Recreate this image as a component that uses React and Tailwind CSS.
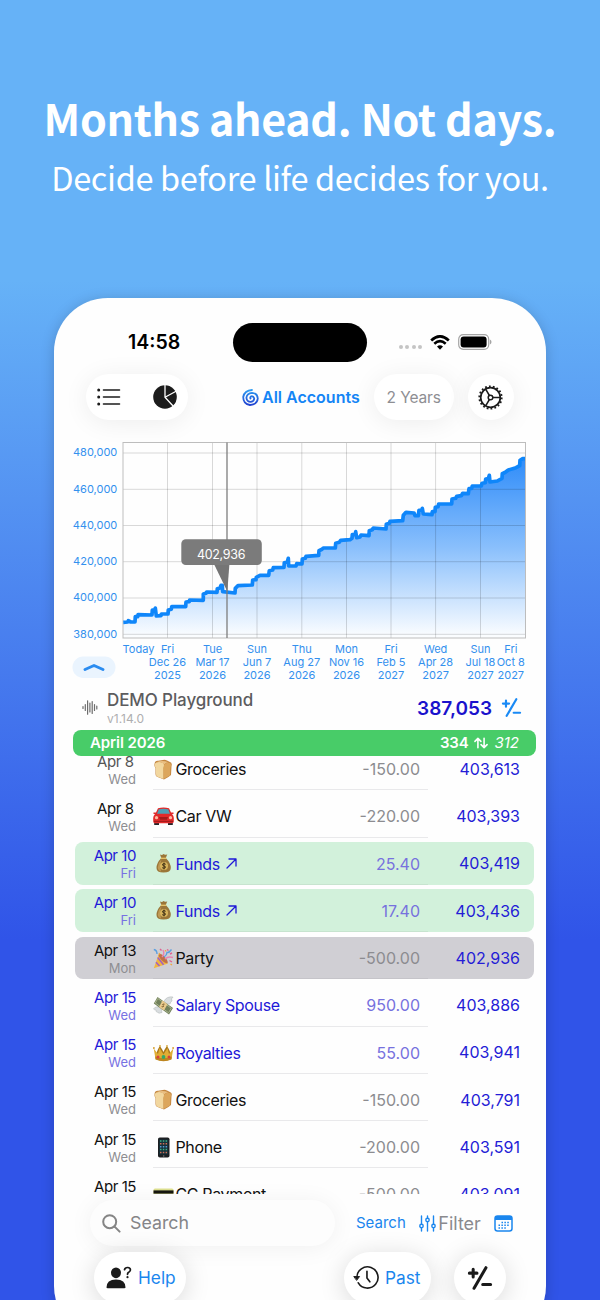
import React from 'react';

const TRANSACTIONS = [
    { date: 'Apr 8', day: 'Wed', icon: 'bread', name: 'Groceries', amount: '-150.00', balance: '403,613', faded: true },
    { date: 'Apr 8', day: 'Wed', icon: 'car', name: 'Car VW', amount: '-220.00', balance: '403,393' },
    { date: 'Apr 10', day: 'Fri', icon: 'bag', name: 'Funds', amount: '25.40', balance: '403,419', income: true, link: true, highlight: 'green' },
    { date: 'Apr 10', day: 'Fri', icon: 'bag', name: 'Funds', amount: '17.40', balance: '403,436', income: true, link: true, highlight: 'green' },
    { date: 'Apr 13', day: 'Mon', icon: 'party', name: 'Party', amount: '-500.00', balance: '402,936', highlight: 'gray' },
    { date: 'Apr 15', day: 'Wed', icon: 'money', name: 'Salary Spouse', amount: '950.00', balance: '403,886', income: true },
    { date: 'Apr 15', day: 'Wed', icon: 'crown', name: 'Royalties', amount: '55.00', balance: '403,941', income: true },
    { date: 'Apr 15', day: 'Wed', icon: 'bread', name: 'Groceries', amount: '-150.00', balance: '403,791' },
    { date: 'Apr 15', day: 'Wed', icon: 'phone', name: 'Phone', amount: '-200.00', balance: '403,591' },
    { date: 'Apr 15', day: 'Wed', icon: 'card', name: 'CC Payment', amount: '-500.00', balance: '403,091' },
];

const Y_TICKS = [
    ['480,000', 23], ['460,000', 59.3], ['440,000', 95.5], ['420,000', 131.7], ['400,000', 168], ['380,000', 204.3],
];

const X_TICKS = [
    [107.5, 'Fri', 'Dec 26', '2025'],
    [152.5, 'Tue', 'Mar 17', '2026'],
    [197, 'Sun', 'Jun 7', '2026'],
    [241.8, 'Thu', 'Aug 27', '2026'],
    [286.5, 'Mon', 'Nov 16', '2026'],
    [331, 'Fri', 'Feb 5', '2027'],
    [375.6, 'Wed', 'Apr 28', '2027'],
    [420.5, 'Sun', 'Jul 18', '2027'],
];

// balance curve, three units per pixel
const CURVE = [
    [190, 577], [203, 576], [205, 572], [212, 576], [225, 576], [226, 560], [233, 560], [234, 554], [276, 555], [277, 540], [285, 540], [286, 534],
    [289, 558], [303, 557], [304, 552], [324, 552], [325, 540], [334, 538], [335, 530], [377, 530], [378, 516], [388, 515], [389, 510], [430, 511], [430, 492],
    [438, 490], [440, 486], [471, 487], [472, 476], [480, 474], [483, 466], [487, 466], [488, 485], [525, 489], [526, 475], [534, 467], [577, 465], [578, 450],
    [588, 449], [589, 442], [600, 436], [626, 436], [628, 422], [638, 420], [640, 413], [672, 412], [673, 398], [682, 396], [685, 385], [686, 408], [708, 408],
    [710, 401], [726, 402], [727, 387], [736, 385], [738, 379], [776, 376], [777, 362], [786, 358], [790, 354], [826, 354], [827, 340], [838, 337], [842, 331],
    [870, 329], [876, 325], [877, 314], [886, 313], [887, 305], [890, 323], [900, 321], [903, 315], [927, 317], [928, 302], [937, 299], [940, 294], [978, 297],
    [979, 283], [988, 280], [990, 274], [1028, 272], [1030, 256], [1038, 247], [1062, 249], [1065, 257], [1075, 257], [1077, 241], [1086, 240], [1087, 235],
    [1090, 252], [1116, 254], [1117, 245], [1125, 245], [1126, 232], [1134, 230], [1136, 222], [1175, 222], [1176, 207], [1187, 205], [1190, 199], [1204, 197],
    [1208, 190], [1225, 191], [1227, 176], [1235, 175], [1237, 168], [1264, 168], [1266, 160], [1276, 158], [1277, 147], [1285, 146], [1288, 136], [1290, 156],
    [1312, 153], [1326, 145], [1327, 131], [1336, 127], [1345, 120], [1368, 113], [1379, 107], [1380, 91], [1388, 86], [1395, 86],
].map(([x, y]) => `${(x / 3).toFixed(1)},${(y / 3).toFixed(1)}`).join(' ');

const EmojiIcon = ({ name }) => {
    switch (name) {
        case 'bread':
            return (
                <svg className="size-[21px]" viewBox="0 0 21 21">
                    <path d="M1.500 5Q2 1.500 5 1.800L10 1Q12 0.500 14 1.500L17 3Q19.500 4 18.500 7L18 16Q16 18 11 20.500L4 17.800Q2.500 17 2.500 15L2.500 9Q1 7 1.500 5Z" fill="#c4863f" />
                    <path d="M1.800 5Q3 2.500 7 3Q11 3.500 11 6Q11 8 10.500 9L10.500 20L4 17.500Q3 17 3 15L2.800 9Q1.500 7 1.800 5Z" fill="#f2d79f" />
                    <path d="M11 6Q13 3 16.500 3.800Q19 5 17.500 8.500L17 16.500L10.800 19.700L10.500 9Z" fill="#dca65c" />
                    <path d="M4 3Q9 0.800 15.500 3.300Q12.500 3.500 11 5.500Q9.500 2.800 4 3Z" fill="#e9bf83" />
                </svg>
            );
        case 'car':
            return (
                <svg className="size-[21px]" viewBox="0 0 21 21">
                    <path d="M1.200 15h4.800v4H1.200zM15 15h4.800v4H15z" fill="#26262b" />
                    <path d="M0.500 6.500h2.500L5 2.200Q10.500 0.800 16 2.200L18 6.500H20.500V8H19Q20.800 10 20.800 12V15.500Q20.800 17.300 19 17.300H2Q0.200 17.300 0.200 15.500V12Q0.200 10 2 8H0.500Z" fill="#e22a2a" />
                    <path d="M5.800 3.300Q10.500 2.100 15.200 3.300L17 7.700H4Z" fill="#4e9fb5" />
                    <path d="M6 11h9l-1 2.800H7z" fill="#a51c1c" />
                    <circle cx="3.500" cy="11.700" r="1.600" fill="#ffb9a0" />
                    <circle cx="17.500" cy="11.700" r="1.600" fill="#ffb9a0" />
                    <path d="M1 15.300h19" stroke="#8e1717" strokeWidth="0.900" />
                </svg>
            );
        case 'bag':
            return (
                <svg className="size-[21px]" viewBox="0 0 21 21">
                    <path d="M7 1.500Q9 2.500 10.500 1Q12 2.500 14.300 1.300L12.800 5Q17.800 10 17.800 15Q17.800 19.500 10.500 19.500Q3.500 19.500 3.500 15Q3.500 10 8.300 5Z" fill="#9b7638" />
                    <path d="M8.500 6.300Q5 10 4.800 14.500Q5 17.500 8 18.500Q6.500 12 8.500 6.300Z" fill="#c09a55" />
                    <path d="M7.800 5.300h5.500" stroke="#e8c66a" strokeWidth="1.300" />
                    <circle cx="11" cy="13" r="4" fill="#d8b45c" />
                    <path d="M12.700 11.300Q11 10 9.700 11.100Q9 12.500 11 13Q13.200 13.500 12.200 14.800Q11 15.800 9.200 14.700M11 9.600v6.800" fill="none" stroke="#3f2f14" strokeWidth="1" />
                </svg>
            );
        case 'party':
            return (
                <svg className="size-[21px]" viewBox="0 0 21 21">
                    <path d="M0.800 20.200L5.800 6L15 15.500Z" fill="#f0b640" />
                    <path d="M4.700 9.500L10.500 16.700M3 14.200L6.500 18" stroke="#a35fc4" strokeWidth="1.500" />
                    <ellipse cx="10.200" cy="10.600" rx="2.200" ry="6.200" transform="rotate(-44 10.200 10.600)" fill="#c07048" />
                    <path d="M9 9Q12 6 10 2M12 11Q15 8 20 9.500" fill="none" stroke="#e884b0" strokeWidth="1.400" />
                    <path d="M11 9Q14 7 14 4.500Q16 5 18.500 1.500M0.800 1.500Q4 2 4 6" fill="none" stroke="#5a9fe0" strokeWidth="1.400" />
                    <path d="M7 1l1.500 1.500M14 1.500l1.500 1M17 6l2-1M16.500 12.500l2.500 1.500" stroke="#e06090" strokeWidth="1.400" />
                    <path d="M6 5l1 1.500M17.500 16l1.500 1M12.500 2v1.500" stroke="#f2a93b" strokeWidth="1.300" />
                </svg>
            );
        case 'money':
            return (
                <svg className="size-[21px]" viewBox="0 0 21 21">
                    <path d="M11 6Q14 1 20 2Q19.500 3.500 18 4Q19.500 4.500 19 6Q17.500 6.500 17 9L12 9Z" fill="#d9dddf" stroke="#aeb4b5" strokeWidth="0.500" />
                    <path d="M8 12Q2 11 0.500 14Q1.500 15 3 15Q2.500 17 4.500 17.300Q5.500 19 9 17.500Z" fill="#d9dddf" stroke="#aeb4b5" strokeWidth="0.500" />
                    <path d="M4.500 2L20 13L16 19.500L0.800 8.500Z" fill="#71805b" />
                    <path d="M4.800 3.500L18.300 13.200L15.500 17.700L2.300 8Z" fill="none" stroke="#b8c298" strokeWidth="0.800" />
                    <path d="M9.500 5.500L14.500 9.200L11 15.500L6 12Z" fill="#e8c98d" />
                    <path d="M11.500 9.200Q9.500 8.500 9.700 10Q11.500 10.800 10 12Q9 12 8.700 11.200" fill="none" stroke="#735626" strokeWidth="0.900" />
                </svg>
            );
        case 'crown':
            return (
                <svg className="size-[21px]" viewBox="0 0 21 21">
                    <path d="M3.500 11Q6 4 7 4.500Q8 5 10.500 10Q13 4.500 14 4.500Q15 4.500 17.500 11L16 15H5Z" fill="#a8781c" />
                    <path d="M0.700 6.500L5 12L6.500 6L10.500 12.500L14.500 6L16 12L20.300 6.500L18.500 17Q10.500 21 2.500 17Z" fill="#e0ad35" />
                    <path d="M2.200 14.500Q10.500 18 18.800 14.500L18.500 17.500Q10.500 21 2.500 17.500Z" fill="#bd851f" />
                    <circle cx="10.500" cy="15" r="1.900" fill="#32a86a" />
                    <circle cx="5" cy="15" r="1.500" fill="#d9403b" />
                    <circle cx="16" cy="15" r="1.500" fill="#d9403b" />
                    <circle cx="0.900" cy="6" r="0.900" fill="#d49a24" />
                    <circle cx="20.100" cy="6" r="0.900" fill="#d49a24" />
                    <circle cx="7" cy="4" r="0.900" fill="#d9ab40" />
                    <circle cx="14" cy="4" r="0.900" fill="#d9ab40" />
                </svg>
            );
        case 'phone':
            return (
                <svg className="size-[21px]" viewBox="0 0 21 21">
                    <rect x="5" y="0.500" width="11.500" height="20" rx="1.800" fill="#1d1f22" />
                    <rect x="6.200" y="2.500" width="9" height="15" fill="#14313a" />
                    <path d="M7 4h7.500M7 12.500h7.500" stroke="#3fae86" strokeWidth="1.500" strokeDasharray="1.500 1.300" />
                    <path d="M7 6.800h7.500M7 15.500h7.500" stroke="#cf6f58" strokeWidth="1.500" strokeDasharray="1.500 1.300" />
                    <path d="M7 9.700h7.500" stroke="#5a9bd6" strokeWidth="1.500" strokeDasharray="1.500 1.300" />
                    <circle cx="10.700" cy="19" r="0.800" fill="#777" />
                </svg>
            );
        default:
            return (
                <svg className="size-[21px]" viewBox="0 0 21 21">
                    <rect x="0.500" y="4.500" width="20" height="13" rx="1.500" fill="#dde08f" />
                    <path d="M0.500 8h20" stroke="#15150f" strokeWidth="3.200" />
                    <path d="M3 12.500h9" stroke="#fff" strokeWidth="2" />
                </svg>
            );
    }
};

const PlusMinusIcon = ({ className, strokeWidth = 2 }) => (
    <svg className={className} viewBox="0 0 24 24" fill="none" stroke="currentColor" strokeWidth={strokeWidth} strokeLinecap="round">
        <path d="M17.500 2.500L6.500 21.500M2.200 7.500h7M5.700 4v7M14.500 18h7.300" />
    </svg>
);

const StatusBar = () => (
    <div className="flex items-center h-[39px] mt-[24.500px] px-[54px]">
        <div className="w-[125px] pl-5 pt-[2px] text-[19.500px] font-semibold text-black">14:58</div>
        <div className="w-[134px] h-[39px] rounded-full bg-black" />
        <div className="flex flex-1 items-center pl-[32px]">
            <div className="flex gap-[2.500px] pt-[10px]">
                {[0, 1, 2, 3].map(i => <span key={i} className="size-1 rounded-full bg-[#c4c4c4]" />)}
            </div>
            <svg className="ml-[8px] w-[20px] h-[15px] shrink-0" viewBox="0 0 20 15">
                <path d="M1.200 5.400Q10-2.600 18.800 5.400" fill="none" stroke="#000" strokeWidth="2.700" />
                <path d="M4.300 8.800Q10 3.600 15.700 8.800" fill="none" stroke="#000" strokeWidth="2.600" />
                <path d="M7 11.500Q10 8.800 13 11.500L10 14.700Z" fill="#000" />
            </svg>
            <svg className="ml-[8px] w-[34px] h-[16px] shrink-0" viewBox="0 0 34 16">
                <rect x="0.700" y="0.700" width="30" height="14.600" rx="4.500" fill="#fff" stroke="#a5a5a5" strokeWidth="1.200" />
                <rect x="2.600" y="2.500" width="26" height="11" rx="3" fill="#000" />
                <path d="M31.900 5.500Q33.500 6.300 33.500 8Q33.500 9.700 31.900 10.500Z" fill="#a5a5a5" />
            </svg>
        </div>
    </div>
);

const Toolbar = () => (
    <div className="flex items-center h-[46px] mt-[12.500px] pl-[32px]">
        <div className="flex items-center justify-between w-[102px] h-[46px] rounded-full bg-white pl-[11px] pr-[11px] shadow-[0_3px_26px_rgba(0,0,0,0.07)]">
            <svg className="w-[24px] h-[18px]" viewBox="0 0 24 18" stroke="#1c1c1c" strokeWidth="1.600" strokeLinecap="round">
                <path d="M6.500 2h16M6.500 9h16M6.500 16h16" />
                <path d="M1.700 2h0.010M1.700 9h0.010M1.700 16h0.010" strokeWidth="3" />
            </svg>
            <svg className="size-[24px]" viewBox="0 0 24 24">
                <circle cx="12" cy="12" r="11.800" fill="#1c1c1c" />
                <path d="M12 0V12.300L20.500 21.500M12 12.300L23.500 6" fill="none" stroke="#fff" strokeWidth="1.300" />
            </svg>
        </div>
        <div className="flex items-center ml-[54px] text-[#1485f5]">
            <svg className="size-[17px]" viewBox="0 0 17 17" fill="none" strokeLinecap="round">
                <defs>
                    <linearGradient id="cyclone" x1="0" y1="0" x2="0" y2="1">
                        <stop offset="0" stopColor="#2f9df2" />
                        <stop offset="1" stopColor="#2142d0" />
                    </linearGradient>
                </defs>
                <path d="M10 1Q2.500 1.500 1.200 8Q1.200 15 8 16Q15.200 15.500 15.800 9.500Q15.500 4.300 10 3.900Q4.800 4.300 4.400 8.800Q4.900 12.700 8.800 12.900Q12.300 12.300 12.200 9.300Q11.500 7 9.300 7.300Q7.800 8 8.500 9.500" stroke="url(#cyclone)" strokeWidth="1.800" />
            </svg>
            <span className="ml-[3px] text-[16px] font-semibold whitespace-nowrap">All Accounts</span>
        </div>
        <div className="flex items-center justify-center ml-[14px] pt-[2px] w-[80px] h-[46px] rounded-full bg-white text-[15.500px] tracking-[-0.1px] text-[#8e8e93] shadow-[0_3px_26px_rgba(0,0,0,0.07)]">
            2 Years
        </div>
        <div className="flex items-center justify-center ml-[14px] size-[46px] rounded-full bg-white shadow-[0_3px_26px_rgba(0,0,0,0.07)]">
            <svg className="size-[25px]" viewBox="0 0 25 25" fill="none" stroke="#1c1c1c">
                <circle cx="12.500" cy="12.500" r="9.800" strokeWidth="1.700" />
                <circle cx="12.500" cy="12.500" r="11.200" strokeWidth="1.800" strokeDasharray="1.800 2.110" />
                <circle cx="12.500" cy="12.500" r="2.300" strokeWidth="1.500" />
                <path d="M14.800 12.500H22M11.400 10.500L7.800 4.300M11.400 14.500L7.800 20.700" strokeWidth="1.500" />
            </svg>
        </div>
    </div>
);

const BalanceChart = () => (
    <svg className="block w-[480px] h-[255px] mx-[6px] mt-[9.500px]" viewBox="0 0 480 255" fontFamily="Inter, sans-serif">
        <defs>
            <linearGradient id="area" gradientUnits="userSpaceOnUse" x1="0" y1="28" x2="0" y2="206">
                <stop offset="0" stopColor="#2f8cf9" />
                <stop offset="0.500" stopColor="#89bffc" />
                <stop offset="1" stopColor="#fbfdff" />
            </linearGradient>
        </defs>
        <polygon points={`63,208 ${CURVE} 465,208`} fill="url(#area)" />
        <g stroke="#000" strokeOpacity="0.150" strokeWidth="1">
            {Y_TICKS.map(([label, y]) => <path key={label} d={`M63 ${y}H465.500`} />)}
            {X_TICKS.map(([x]) => <path key={x} d={`M${x} 12.500V208`} />)}
        </g>
        <rect x="63" y="12.500" width="402.500" height="195.500" fill="none" stroke="#bdbdbd" strokeWidth="1" />
        <polyline points={CURVE} fill="none" stroke="#0f86fa" strokeWidth="3.700" strokeLinejoin="round" />
        <path d="M167 12.500V208" stroke="#7d7d7d" strokeWidth="1.300" />
        <path d="M153.500 133h16L167.300 161.500Z" fill="#757575" />
        <rect x="121.300" y="109.300" width="80.500" height="25.700" rx="4.500" fill="#7b7b7b" />
        <text x="161" y="128.800" textAnchor="middle" fontSize="12.500" letterSpacing="-0.300" fill="#fff">402,936</text>
        <g fill="#3390ee" fontSize="11">
            {Y_TICKS.map(([label, y]) => <text key={label} x="57.300" y={y + 3.200} textAnchor="end">{label}</text>)}
            <text x="78.500" y="223" textAnchor="middle">Today</text>
            {X_TICKS.map(([x, day, date, year]) => (
                <g key={x} textAnchor="middle">
                    <text x={x} y="223">{day}</text>
                    <text x={x} y="236">{date}</text>
                    <text x={x} y="249">{year}</text>
                </g>
            ))}
            <g textAnchor="middle">
                <text x="450.800" y="223">Fri</text>
                <text x="450.800" y="236">Oct 8</text>
                <text x="450.800" y="249">2027</text>
            </g>
        </g>
        <rect x="12.500" y="226.500" width="43" height="21.500" rx="10.750" fill="#eaf4fe" />
        <path d="M25 239.500L34 235.500L43 239.500" fill="none" stroke="#2b8cf0" strokeWidth="3" strokeLinecap="round" strokeLinejoin="round" />
    </svg>
);

const AccountHeader = () => (
    <div className="flex items-center h-[45.500px] pl-[28px] pr-[24px]">
        <svg className="w-[16px] h-[15px]" viewBox="0 0 16 15" stroke="#6d6d6d" strokeWidth="1.200" strokeLinecap="round">
            <path d="M1 6.500v2M3.300 4.500v6M5.600 0.800v13.400M7.900 3v9M10.200 1.500v12M12.500 4.500v6M14.800 6v3" />
        </svg>
        <div className="ml-[9px] pt-[2px] flex-1">
            <div className="text-[17px] leading-[19px] tracking-[-0.1px] font-medium text-[#5c5c5e]">DEMO Playground</div>
            <div className="mt-[2px] text-[12px] leading-[14px] text-[#aeaeb0]">v1.14.0</div>
        </div>
        <span className="pt-[3px] text-[19px] font-semibold text-[#1a12cc]">387,053</span>
        <PlusMinusIcon className="ml-[9px] size-[21px] text-[#1a8af5]" strokeWidth={2.500} />
    </div>
);

const MonthBar = () => (
    <div className="flex items-center justify-between h-[25.500px] ml-[18.500px] mr-[10px] pl-[17.500px] pr-[17px] rounded-[8px] bg-[#48cc68] text-white text-[15px]">
        <span className="font-semibold tracking-[-0.1px]">April 2026</span>
        <div className="flex items-center">
            <span className="font-semibold tracking-[-0.2px]">334</span>
            <svg className="mx-[6px] w-[14px] h-[12px]" viewBox="0 0 15 12" fill="none" stroke="currentColor" strokeWidth="1.700" strokeLinecap="round" strokeLinejoin="round">
                <path d="M4.200 11V1M1 4.200L4.200 1L7.400 4.200M10.800 1v10M7.600 7.800L10.800 11L14 7.800" />
            </svg>
            <span className="italic">312</span>
        </div>
    </div>
);

const HIGHLIGHTS = {
    green: 'bg-[#d2f1db]',
    gray: 'bg-[#d0cfd4]',
};

const TransactionRow = ({ tx }) => (
    <div className="h-[47.250px] shrink-0 pt-[4.500px] pl-[20.500px] pr-[12px]">
        <div className={`flex h-[42.750px] rounded-[8px] ${HIGHLIGHTS[tx.highlight] || ''}`}>
            <div className="w-[61.500px] text-right">
                <div className={`mt-[5px] text-[15px] leading-[18px] tracking-[-0.45px] ${tx.date === 'Apr 8' ? 'pr-[2.500px]' : ''} ${tx.income ? 'text-[#1f19d8]' : tx.faded ? 'text-[#555]' : 'text-[#111]'}`}>{tx.date}</div>
                <div className={`text-[13px] leading-[17px] ${tx.income ? 'text-[#7771e2]' : 'text-[#8e8e92]'}`}>{tx.day}</div>
            </div>
            <div className={`flex w-[275px] ml-[17px] h-[42.750px] border-b ${tx.highlight ? 'border-black/5' : 'border-[#e9e9eb]'}`}>
                <div className="flex flex-1 items-center h-[43px]">
                    <EmojiIcon name={tx.icon} />
                    <span className={`ml-[1.500px] text-[16px] tracking-[-0.35px] ${tx.income ? 'text-[#1f19d8]' : 'text-[#111]'}`}>{tx.name}</span>
                    {tx.link && (
                        <svg className="ml-[6px] size-[11px] text-[#1f19d8]" viewBox="0 0 11 11" fill="none" stroke="currentColor" strokeWidth="1.300" strokeLinecap="round" strokeLinejoin="round">
                            <path d="M1 10L10 1M3 1h7v7" />
                        </svg>
                    )}
                </div>
                <div className={`flex items-center h-[43px] pr-[8px] text-[16px] ${tx.income ? 'text-[#7771de]' : 'text-[#8c8c90]'}`}>{tx.amount}</div>
            </div>
            <div className="flex flex-1 items-center justify-end pr-[14px] text-[16px] text-[#241cd6]">{tx.balance}</div>
        </div>
    </div>
);

const BottomBar = () => (
    <div className="pt-[6.500px]">
        <div className="flex items-center h-[46px]">
            <div className="flex items-center ml-[36px] w-[245px] h-[46px] rounded-[23px] bg-[#fdfdfd] pl-[12px] shadow-[0_2px_24px_rgba(0,0,0,0.06)]">
                <svg className="size-[19px]" viewBox="0 0 19 19" fill="none" stroke="#858585" strokeWidth="2" strokeLinecap="round">
                    <circle cx="7.700" cy="7.700" r="6.500" />
                    <path d="M12.600 12.600L17.600 17.600" />
                </svg>
                <span className="ml-[9px] text-[17.800px] text-[#858588]">Search</span>
            </div>
            <span className="ml-[21px] text-[15px] text-[#1a86ee]">Search</span>
            <svg className="ml-[13px] w-[17px] h-[17px] shrink-0" viewBox="0 0 17 17" fill="none" stroke="#1a86ee" strokeWidth="1.400" strokeLinecap="round">
                <path d="M2.500 1v8M2.500 13v3M8.500 1v2M8.500 7v9M14.500 1v8M14.500 13v3" />
                <circle cx="2.500" cy="11" r="1.700" />
                <circle cx="8.500" cy="5" r="1.700" />
                <circle cx="14.500" cy="11" r="1.700" />
            </svg>
            <span className="ml-[2.500px] text-[18px] text-[#8a8a8e]">Filter</span>
            <svg className="ml-[13px] w-[19px] h-[17px] shrink-0" viewBox="0 0 19 17">
                <rect x="1" y="1" width="17" height="15" rx="2.500" fill="#fff" stroke="#1a86ee" strokeWidth="1.500" />
                <path d="M1 3.500Q1 1 3.500 1h12Q18 1 18 3.500V5H1Z" fill="#1a86ee" />
                <path d="M7.500 7.500h8M4.500 10.300h11M4.500 13h8" stroke="#1a86ee" strokeWidth="1.500" strokeDasharray="1.500 1.400" />
            </svg>
        </div>
        <div className="flex mt-[5.500px] ml-[40px]">
            <div className="flex items-center w-[92px] h-[52px] rounded-full bg-white pl-[12px] shadow-[0_4px_26px_rgba(0,0,0,0.15)]">
                <svg className="w-[26px] h-[23px]" viewBox="0 0 26 23" fill="#1a1a1a">
                    <ellipse cx="10" cy="6.800" rx="5" ry="5.400" />
                    <path d="M0.500 21.500Q0.500 13.500 10 13.500T19.500 21.500Q19.500 22.300 18.300 22.300H1.700Q0.500 22.300 0.500 21.500Z" />
                    <path d="M18.500 3.700Q19 1.400 21.700 1.500Q24.500 1.700 24.400 4Q24.200 5.600 22.400 6.500Q21.500 7.200 21.500 8.300" fill="none" stroke="#1a1a1a" strokeWidth="1.700" strokeLinecap="round" />
                    <circle cx="21.500" cy="11.200" r="1.100" />
                </svg>
                <span className="ml-[6px] text-[17.300px] text-[#1a86ee]">Help</span>
            </div>
            <div className="flex items-center ml-[158px] w-[87px] h-[52px] rounded-full bg-white pl-[9px] shadow-[0_4px_26px_rgba(0,0,0,0.15)]">
                <svg className="w-[26px] h-[25px]" viewBox="0 0 27 25" fill="none" stroke="#1a1a1a" strokeWidth="1.700" strokeLinecap="round" strokeLinejoin="round">
                    <path d="M4 12.500A11 11 0 1 1 5.500 18" />
                    <path d="M1.200 11.500H6.800L4 15.200Z" fill="#1a1a1a" strokeWidth="1" />
                    <path d="M14.500 6V13L17.500 17" />
                </svg>
                <span className="ml-[6px] text-[17.300px] text-[#1a86ee]">Past</span>
            </div>
            <div className="flex items-center justify-center ml-[23px] size-[52px] rounded-full bg-white shadow-[0_4px_26px_rgba(0,0,0,0.15)]">
                <PlusMinusIcon className="size-[26px] text-[#1a1a1a]" strokeWidth={2.800} />
            </div>
        </div>
    </div>
);

export default function App() {
    return (
        <div className="w-[600px] h-[1300px] overflow-hidden bg-[linear-gradient(180deg,#66b2f7_0px,#66b2f7_280px,#3054e8_940px,#3054e8_1300px)] font-['Inter',sans-serif]">
            <div className="h-[298px] pt-[87px] text-center text-white font-['Noto_Sans_CJK_JP',sans-serif] whitespace-nowrap">
                <h1 className="text-[43px] leading-[60px] tracking-[-0.35px] font-bold">Months ahead. Not days.</h1>
                <p className="mt-[2px] text-[32.500px] leading-[56px] tracking-[-0.35px] font-normal">Decide before life decides for you.</p>
            </div>
            <div className="flow-root w-[492px] h-[1042px] mx-auto rounded-[54px] overflow-hidden bg-[#fefefe] shadow-[0_2px_14px_rgba(0,0,0,0.18)]">
                <StatusBar />
                <Toolbar />
                <BalanceChart />
                <AccountHeader />
                <MonthBar />
                <div className="h-[438px] overflow-hidden">
                    <div className="flex flex-col -mt-[12.500px]">
                        {TRANSACTIONS.map((tx, index) => <TransactionRow key={index} tx={tx} />)}
                    </div>
                </div>
                <BottomBar />
            </div>
        </div>
    );
}
